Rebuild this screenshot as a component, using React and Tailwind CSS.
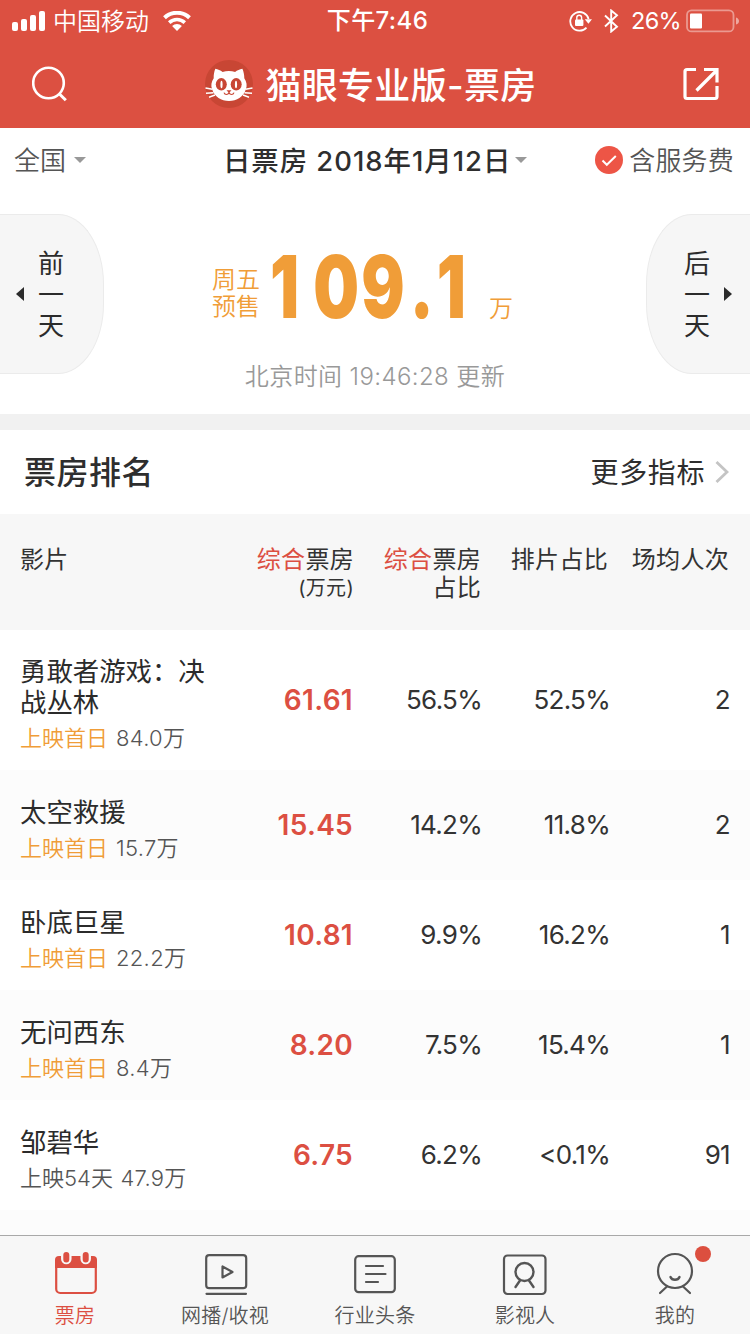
import React from "react";

const movies = [
  { title: ["勇敢者游戏：决", "战丛林"], tag: "上映首日", total: "84.0万", box: "61.61", share: "56.5%", slots: "52.5%", avg: "2" },
  { title: ["太空救援"], tag: "上映首日", total: "15.7万", box: "15.45", share: "14.2%", slots: "11.8%", avg: "2" },
  { title: ["卧底巨星"], tag: "上映首日", total: "22.2万", box: "10.81", share: "9.9%", slots: "16.2%", avg: "1" },
  { title: ["无问西东"], tag: "上映首日", total: "8.4万", box: "8.20", share: "7.5%", slots: "15.4%", avg: "1" },
  { title: ["邹碧华"], days: "上映54天", total: "47.9万", box: "6.75", share: "6.2%", slots: "<0.1%", avg: "91" },
];

function StatusBar() {
  return (
    <div className="grid h-10 grid-cols-3 items-center text-[24px] leading-10 text-white">
      <div className="flex h-10 items-center pl-3">
        <svg width="34" height="20" viewBox="0 0 34 20" fill="currentColor">
          <rect x="0" y="11" width="6" height="9" rx="2" />
          <rect x="9" y="8" width="6" height="12" rx="2" />
          <rect x="18" y="4" width="6" height="16" rx="2" />
          <rect x="27" y="0" width="6" height="20" rx="2" />
        </svg>
        <span className="ml-[7px] pt-[2px] font-[350]">中国移动</span>
        <svg className="ml-[14px]" width="28" height="20" viewBox="0 0 28 20" fill="none" stroke="currentColor">
          <path d="M1.5 6.8a18 18 0 0 1 25 0" strokeWidth="4" />
          <path d="M6.2 11.6a11.5 11.5 0 0 1 15.6 0" strokeWidth="3.6" />
          <path d="M14 20l-4.9-5a7 7 0 0 1 9.8 0z" fill="currentColor" stroke="none" />
        </svg>
      </div>
      <div className="pt-[1px] pl-[5px] text-center font-medium tracking-[0.4px]">下午7:46</div>
      <div className="flex h-10 items-center justify-end pr-[10px]">
        <svg width="23" height="22" viewBox="0 0 23 22" fill="none" stroke="currentColor" strokeWidth="1.8">
          <path d="M17.5 17.6A9.3 9.3 0 1 1 19.6 9" />
          <path d="M15.8 9.2h7.2l-3.6 4.6z" fill="currentColor" stroke="none" />
          <rect x="6" y="9.5" width="8.4" height="6.6" rx="1" fill="currentColor" stroke="none" />
          <path d="M7.8 10V7.6a2.4 2.4 0 0 1 4.8 0V10" strokeWidth="1.4" />
        </svg>
        <svg className="ml-[12px]" width="15" height="24" viewBox="0 0 15 24" fill="none" stroke="currentColor" strokeWidth="1.9">
          <path d="M1 6.5l12 11.2-5.8 4.8V1.5L13 6.3 1 17.5" />
        </svg>
        <span className="ml-[12px] w-[52px] pt-[1px] text-[23.5px] tracking-[-0.7px] whitespace-nowrap">26%</span>
        <svg className="ml-[3px]" width="54" height="24" viewBox="0 0 54 24">
          <rect x="1" y="1.4" width="46.5" height="21" rx="4.5" fill="none" stroke="#fff" strokeOpacity=".42" strokeWidth="1.8" />
          <rect x="4" y="4.4" width="12" height="15" rx="1" fill="#fff" />
          <path d="M50 8.4q3 1 3 3.6t-3 3.6z" fill="#fff" fillOpacity=".5" />
        </svg>
      </div>
    </div>
  );
}

function CatLogo() {
  return (
    <svg width="50" height="50" viewBox="0 0 50 50">
      <circle cx="25" cy="25" r="24" fill="#c84634" />
      <path d="M11.3 9.700c2.600.500 5.200 1.600 7.300 3.200 4-1.300 8.500-1.300 12.500 0 2.100-1.600 4.700-2.700 7.300-3.200 1.300 3 1.900 6.300 1.900 9.500 2.400 3.400 3 7.400 1.600 11.100C39.500 37.700 32.800 42 25 42S10.500 37.700 8.100 30.300c-1.400-3.700-.8-7.700 1.600-11.100-.1-3.200.4-6.500 1.600-9.500z" fill="#fff" />
      <g fill="#c84634">
        <ellipse cx="17.300" cy="25.300" rx="5.500" ry="6.200" />
        <ellipse cx="32.200" cy="25.300" rx="5.500" ry="6.200" />
        <path d="M22.500 31.300h5l-2.500 2.600z" />
      </g>
      <ellipse cx="17.500" cy="25.500" rx="1.100" ry="3.800" fill="#fff" />
      <ellipse cx="32" cy="25.500" rx="1.100" ry="3.800" fill="#fff" />
      <path d="M20 33.700c.8 2.400 4 2.400 5 0 1 2.400 4.200 2.400 5 0" fill="none" stroke="#c84634" strokeWidth="1.100" />
      <path d="M1.500 29l7 1.300M2 34.300l7.500-.6M5 38.300l6-2.300M48.500 29l-7 1.300M48 34.300l-7.500-.6M45 38.300l-6-2.300" stroke="#fff" strokeWidth="1.500" />
    </svg>
  );
}

function TitleBar() {
  return (
    <div className="flex h-[88px] items-center justify-between pr-[30px] pl-8 text-white">
      <svg width="36" height="36" viewBox="0 0 36 36" fill="none" stroke="currentColor" strokeWidth="2.600">
        <circle cx="16.500" cy="17" r="15.300" />
        <path d="M27.500 28l6.300 6.300" strokeWidth="3" />
      </svg>
      <div className="-ml-[9px] flex items-center">
        <CatLogo />
        <h1 className="ml-[11px] pt-[4px] text-[36px] leading-[84px] font-medium tracking-[0.300px]">猫眼专业版-票房</h1>
      </div>
      <svg width="38" height="36" viewBox="0 0 38 36" fill="none" stroke="currentColor" strokeWidth="3.200">
        <path d="M14 3.500H5q-2 0-2 2v25q0 2 2 2H33q2 0 2-2V20" />
        <path d="M14.500 24.500L34.500 4.500M22 3.500h13v13" />
      </svg>
    </div>
  );
}

function Caret() {
  return (
    <svg width="12" height="6" viewBox="0 0 12 6" fill="#999">
      <path d="M0 0h12L6 6z" />
    </svg>
  );
}

function FilterBar() {
  return (
    <div className="flex h-16 items-center justify-between pr-4 pl-[14px] text-[26px] leading-[62px] font-[350] text-[#555]">
      <div className="flex w-[141px] items-center gap-2">
        <span className="pt-[2px]">全国</span>
        <Caret />
      </div>
      <div className="flex items-center gap-[4px] font-medium text-[#2e2e2e]">
        <span className="pt-[2px] text-[27.400px] tracking-[1px]">日票房 2018年1月12日</span>
        <Caret />
      </div>
      <div className="flex items-center gap-[6px]">
        <svg width="28" height="28" viewBox="0 0 28 28" fill="none">
          <circle cx="14" cy="14" r="14" fill="#ed5546" />
          <path d="M7.500 14.500l4.300 4.300 9-8.800" stroke="#fff" strokeWidth="2" />
        </svg>
        <span className="pt-[2px] tracking-[0.200px]">含服务费</span>
      </div>
    </div>
  );
}

function DayLabel({ first }) {
  return (
    <div className="flex w-[26px] flex-col text-[26px] leading-[31px] text-[#2b2b2b]">
      <span>{first}</span>
      <span>一</span>
      <span>天</span>
    </div>
  );
}

function Summary() {
  return (
    <div className="flex h-[222px] items-start justify-between pt-[22px]">
      <button className="flex h-40 w-[104px] items-center gap-[14px] border border-l-0 border-[#ebebeb] bg-[#f6f6f6] pl-4 [border-bottom-right-radius:46px_70px] [border-top-right-radius:46px_70px]">
        <svg width="8" height="14" viewBox="0 0 8 14" fill="#2b2b2b"><path d="M8 0v14L0 7z" /></svg>
        <DayLabel first="前" />
      </button>
      <div className="flex flex-col items-center">
        <div className="flex h-[120px] w-[328px] pl-px text-[24px] text-[#f09d38]">
          <div className="w-[48px] pt-[52px] leading-[27px] font-[350]">
            <div>周五</div>
            <div>预售</div>
          </div>
          <div className="h-[120px] w-[229px] pt-[23px] pl-[10px]">
            <div className="w-[300px] origin-left scale-x-[0.740] text-[87px] leading-[100px] font-black whitespace-nowrap">
              <span className="tracking-[19px]">1</span>
              <span className="tracking-[3px]">0</span>
              <span className="tracking-[7px]">9</span>
              <span className="tracking-[4px]">.</span>1
            </div>
          </div>
          <div className="pt-[81px] leading-[28px] font-[350]">万</div>
        </div>
        <div className="mt-[25px] text-[24px] leading-[36px] font-[350] tracking-[0.400px] text-[#999]">北京时间 19:46:28 更新</div>
      </div>
      <button className="flex h-40 w-[104px] items-center justify-end gap-[14px] border border-r-0 border-[#ebebeb] bg-[#f6f6f6] pr-[18px] [border-bottom-left-radius:46px_70px] [border-top-left-radius:46px_70px]">
        <DayLabel first="后" />
        <svg width="8" height="14" viewBox="0 0 8 14" fill="#2b2b2b"><path d="M0 0v14l8-7z" /></svg>
      </button>
    </div>
  );
}

function Ranking() {
  return (
    <section>
      <div className="flex h-[84px] items-center justify-between pr-[21px] pl-6 text-[#2e2e2e]">
        <h2 className="pt-[2px] text-[32px] leading-[82px] font-medium tracking-[0.500px]">票房排名</h2>
        <div className="flex items-center gap-[10px] text-[28px] tracking-[0.600px]">
          <span className="pt-[2px]">更多指标</span>
          <svg width="14" height="22" viewBox="0 0 14 22" fill="none" stroke="#c4c4c4" strokeWidth="2.800"><path d="M1.500 1l10.500 10-10.500 10" /></svg>
        </div>
      </div>
      <div className="grid h-[116px] grid-cols-[214px_120px_127px_127px_121px] bg-[#f7f7f7] pt-[32px] pl-5 text-right text-[24px] leading-[28px] tracking-[0.300px] text-[#333]">
        <div className="text-left">影片</div>
        <div>
          <div><span className="text-[#dc4f42]">综合</span>票房</div>
          <div className="text-[20px]">(万元)</div>
        </div>
        <div>
          <div><span className="text-[#dc4f42]">综合</span>票房</div>
          <div>占比</div>
        </div>
        <div>排片占比</div>
        <div>场均人次</div>
      </div>
      {movies.map((m) => (
        <div key={m.box} className="grid min-h-[110px] grid-cols-[214px_119px_129px_128px_120px] items-center bg-white pt-[26px] pb-[15px] pl-5 text-right text-[26px] leading-[31px] tracking-[-0.700px] text-[#333] even:bg-[#fcfcfc]">
          <div className="text-left tracking-normal">
            {m.title.map((line) => <div key={line} className="text-[26.400px] text-[#2b2b2b]">{line}</div>)}
            <div className="mt-[4px] text-[22px] leading-[33px] font-[350] text-[#555]">
              {m.tag ? <span className="mr-[1.5px] text-[#f09d38]">{m.tag}</span> : <span className="mr-px">{m.days}</span>}
              <span className="tracking-[0.300px]"> {m.total}</span>
            </div>
          </div>
          <div className="-mt-[10px] text-[28px] font-semibold tracking-[0.300px] text-[#dc4f42]">{m.box}</div>
          <div className="-mt-[12px]">{m.share}</div>
          <div className="-mt-[12px]">{m.slots}</div>
          <div className="-mt-[12px]">{m.avg}</div>
        </div>
      ))}
    </section>
  );
}

function TabIcon({ name }) {
  return (
    <svg width="48" height="48" viewBox="0 0 48 48" fill="none" stroke="currentColor" strokeWidth="2.200" strokeLinecap="round" strokeLinejoin="round">
      {name === "box" && (
        <>
          <path d="M4 18V10q0-4 4-4h34q4 0 4 4v8z" fill="currentColor" stroke="none" />
          <rect x="5.200" y="8" width="39.600" height="35" rx="4" />
          <path d="M15.300 4.500v4.500M34.700 4.500v4.500" stroke="#f7f7f7" strokeWidth="10.500" />
          <path d="M15.300 5v4.500M34.700 5v4.500" strokeWidth="6" />
        </>
      )}
      {name === "tv" && (
        <>
          <rect x="5.200" y="5.200" width="40" height="33" rx="3" />
          <path d="M5.500 43.800h39.500" />
          <path d="M21.500 16.500v11l10-5.500z" />
        </>
      )}
      {name === "news" && (
        <>
          <rect x="4.200" y="6.200" width="39.600" height="36" rx="3.500" />
          <path d="M15 16h17M15 24h19.500M15 32h12" />
        </>
      )}
      {name === "people" && (
        <>
          <rect x="3" y="5.500" width="41.500" height="38.500" rx="3.500" />
          <circle cx="23.500" cy="22" r="9" strokeWidth="2.400" />
          <path d="M19 30.500l-4.500 6.500M28 30.500l4.500 6.500" strokeWidth="2.400" />
        </>
      )}
      {name === "me" && (
        <>
          <circle cx="24" cy="21" r="17" />
          <path d="M19.500 27c1.500 3.700 7.500 3.700 9 0" strokeWidth="2.400" />
          <path d="M16 36.500l-7 6.500M32 36.500l7 6.500" />
        </>
      )}
    </svg>
  );
}

const tabs = [
  { icon: "box", label: "票房" },
  { icon: "tv", label: "网播/收视" },
  { icon: "news", label: "行业头条" },
  { icon: "people", label: "影视人" },
  { icon: "me", label: "我的" },
];

function TabBar() {
  return (
    <nav className="grid h-[99px] grid-cols-5 border-t border-[#a9a9a9] bg-[#f7f7f7] text-[20px] leading-[30px] font-[350]">
      {tabs.map((t, i) => (
        <div key={t.icon} className={i === 0 ? "flex flex-col items-center pt-[14px] text-[#dc4f42]" : "flex flex-col items-center pt-[14px] text-[#555]"}>
          <div className="relative">
            <TabIcon name={t.icon} />
            {t.icon === "me" && <span className="absolute -top-[4px] left-[44px] size-4 rounded-full bg-[#dc4f3f]" />}
          </div>
          <span className="mt-[3px] tracking-[0.200px]">{t.label}</span>
        </div>
      ))}
    </nav>
  );
}

export default function App() {
  return (
    <div className="flex h-[1334px] w-[750px] flex-col overflow-hidden bg-white font-[Inter,'Noto_Sans_CJK_SC',sans-serif]">
      <header className="bg-[#dc5041]">
        <StatusBar />
        <TitleBar />
      </header>
      <FilterBar />
      <Summary />
      <div className="h-4 bg-[#f1f1f1]" />
      <Ranking />
      <div className="flex-1 bg-[#fcfcfc]" />
      <TabBar />
    </div>
  );
}
